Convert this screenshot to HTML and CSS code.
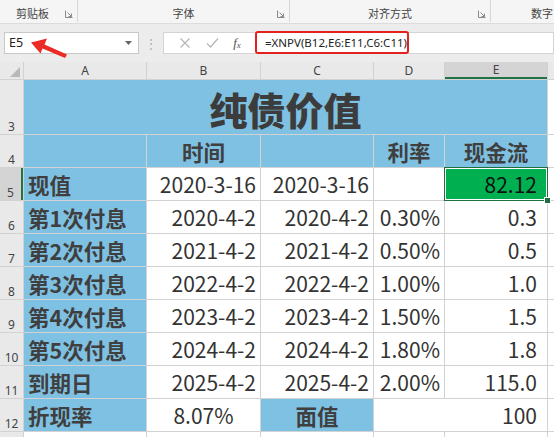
FILE: index.html
```html
<!DOCTYPE html>
<html lang="zh">
<head>
<meta charset="utf-8">
<title>纯债价值</title>
<link rel="stylesheet" href="styles.css">
</head>
<body>
<div class="app">
  <div class="ribbon">
    <div class="grp g1"><span class="glabel">剪贴板</span><svg class="launch" width="8" height="8" viewBox="0 0 8 8"><path d="M0.5 0.5V7.5H7.5" fill="none" stroke="#8a8a8a"/><path d="M2.5 2.5L6.5 6.5M6.5 3.5V6.5H3.5" fill="none" stroke="#8a8a8a"/></svg></div>
    <div class="grp g2"><span class="glabel">字体</span><svg class="launch" width="8" height="8" viewBox="0 0 8 8"><path d="M0.5 0.5V7.5H7.5" fill="none" stroke="#8a8a8a"/><path d="M2.5 2.5L6.5 6.5M6.5 3.5V6.5H3.5" fill="none" stroke="#8a8a8a"/></svg></div>
    <div class="grp g3"><span class="glabel">对齐方式</span><svg class="launch" width="8" height="8" viewBox="0 0 8 8"><path d="M0.5 0.5V7.5H7.5" fill="none" stroke="#8a8a8a"/><path d="M2.5 2.5L6.5 6.5M6.5 3.5V6.5H3.5" fill="none" stroke="#8a8a8a"/></svg></div>
    <div class="grp g4"><span class="glabel">数字</span></div>
  </div>
  <div class="fbar">
    <div class="namebox"><span>E5</span><svg width="7" height="4" viewBox="0 0 7 4"><path d="M0 0H7L3.5 4Z" fill="#666"/></svg></div>
    <div class="dots">⋮</div>
    <div class="fbtns">
      <svg width="12" height="12" viewBox="0 0 12 12"><path d="M1.5 1.5L10.5 10.5M10.5 1.5L1.5 10.5" stroke="#b5b5b5" stroke-width="1.2" fill="none"/></svg>
      <svg width="13" height="12" viewBox="0 0 13 12"><path d="M1 6.5L4.5 10L12 1.5" stroke="#b5b5b5" stroke-width="1.2" fill="none"/></svg>
      <span class="fx">f<sub>x</sub></span>
    </div>
    <div class="finput"><span class="formula">=XNPV(B12,E6:E11,C6:C11)</span></div>
  </div>
  <div class="sheet">
    <div class="corner"><svg width="10" height="10" viewBox="0 0 10 10"><path d="M10 0V10H0Z" fill="#b8b8b8"/></svg></div>
    <div class="ch">A</div><div class="ch">B</div><div class="ch">C</div><div class="ch">D</div><div class="ch sel">E</div><div class="ch"></div>

    <div class="rh">3</div>
    <div class="c blue title">纯债价值</div>
    <div class="c white"></div>

    <div class="rh">4</div>
    <div class="c blue"></div><div class="c blue hd">时间</div><div class="c blue"></div><div class="c blue hd">利率</div><div class="c blue hd">现金流</div><div class="c white"></div>

    <div class="rh rsel">5</div>
    <div class="c blue lab">现值</div><div class="c white num">2020-3-16</div><div class="c white num">2020-3-16</div><div class="c white"></div><div class="c green num e">82.12<span class="handle"></span></div><div class="c white"></div>

    <div class="rh">6</div>
    <div class="c blue lab">第1次付息</div><div class="c white num">2020-4-2</div><div class="c white num">2020-4-2</div><div class="c white num">0.30%</div><div class="c white num e">0.3</div><div class="c white"></div>

    <div class="rh">7</div>
    <div class="c blue lab">第2次付息</div><div class="c white num">2021-4-2</div><div class="c white num">2021-4-2</div><div class="c white num">0.50%</div><div class="c white num e">0.5</div><div class="c white"></div>

    <div class="rh">8</div>
    <div class="c blue lab">第3次付息</div><div class="c white num">2022-4-2</div><div class="c white num">2022-4-2</div><div class="c white num">1.00%</div><div class="c white num e">1.0</div><div class="c white"></div>

    <div class="rh">9</div>
    <div class="c blue lab">第4次付息</div><div class="c white num">2023-4-2</div><div class="c white num">2023-4-2</div><div class="c white num">1.50%</div><div class="c white num e">1.5</div><div class="c white"></div>

    <div class="rh">10</div>
    <div class="c blue lab">第5次付息</div><div class="c white num">2024-4-2</div><div class="c white num">2024-4-2</div><div class="c white num">1.80%</div><div class="c white num e">1.8</div><div class="c white"></div>

    <div class="rh">11</div>
    <div class="c blue lab">到期日</div><div class="c white num">2025-4-2</div><div class="c white num">2025-4-2</div><div class="c white num">2.00%</div><div class="c white num e">115.0</div><div class="c white"></div>

    <div class="rh">12</div>
    <div class="c blue lab">折现率</div><div class="c white num ctr">8.07%</div><div class="c blue hd">面值</div><div class="c white num e span2">100</div><div class="c white"></div>

    <div class="rh"></div>
    <div class="c white"></div><div class="c white"></div><div class="c white"></div><div class="c white"></div><div class="c white"></div><div class="c white"></div>
  </div>
  <svg class="arrow" width="554" height="437" viewBox="0 0 554 437"><path d="M31 42.5L47 38.5L44.5 44.5L67 54.5L65 58L42.5 48.5L40.5 53.5Z" fill="#ec2a26"/></svg>
</div>
</body>
</html>
```
FILE: styles.css
```css
html, body {
  margin: 0;
  padding: 0;
  background: #ffffff;
}
body {
  font-family: "Noto Sans CJK SC", "Noto Sans", sans-serif;
  color: #333;
  width: 554px;
  height: 437px;
  overflow: hidden;
}
.app {
  position: relative;
  width: 554px;
  height: 437px;
  overflow: hidden;
}
.ribbon {
  display: flex;
  height: 24px;
  background: #f5f5f5;
  border-bottom: 1px solid #dcdcdc;
  box-sizing: border-box;
}
.grp {
  position: relative;
  display: flex;
  align-items: flex-end;
  justify-content: center;
  padding-bottom: 2px;
  box-sizing: border-box;
  border-right: 1px solid #d6d6d6;
  height: 22px;
}
.glabel {
  font-size: 11px;
  color: #444;
  line-height: 14px;
}
.launch {
  position: absolute;
  right: 4px;
  bottom: 4px;
}
.g1 { width: 78px; justify-content: flex-start; padding-left: 16px; }
.g2 { width: 212px; }
.g3 { width: 201px; }
.g4 { flex: 1; border-right: none; justify-content: flex-start; padding-left: 40px; }

.fbar {
  display: flex;
  align-items: center;
  height: 38px;
  background: #ececec;
  padding: 7px 0 8px 4px;
  box-sizing: border-box;
}
.namebox {
  width: 135px;
  height: 22px;
  background: #fff;
  border: 1px solid #c8c8c8;
  box-sizing: border-box;
  display: flex;
  align-items: center;
  justify-content: space-between;
  padding: 0 6px 0 4px;
  font-family: "Noto Sans", sans-serif;
  font-size: 12.5px;
  color: #222;
}
.dots {
  width: 24px;
  text-align: center;
  color: #b0b0b0;
  font-size: 12px;
}
.fbtns {
  width: 89px;
  height: 22px;
  background: #fff;
  border: 1px solid #d4d4d4;
  border-right: none;
  box-sizing: border-box;
  display: flex;
  align-items: center;
  justify-content: space-around;
  padding: 0 4px 0 8px;
}
.fx {
  font-family: "Liberation Serif", serif;
  font-style: italic;
  font-size: 13px;
  color: #555;
}
.fx sub {
  font-size: 9px;
  vertical-align: -1px;
}
.finput {
  flex: 1;
  height: 22px;
  background: #fff;
  border: 1px solid #d4d4d4;
  border-left: none;
  box-sizing: border-box;
  display: flex;
  align-items: center;
  padding-left: 3px;
}
.formula {
  display: flex;
  align-items: center;
  height: 23px;
  width: 154px;
  box-sizing: border-box;
  border: 2px solid #e3211f;
  border-radius: 3px;
  padding-left: 8px;
  font-family: "Noto Sans", sans-serif;
  font-size: 11.5px;
  color: #222;
}

.sheet {
  display: grid;
  grid-template-columns: 23px 122px 113px 112px 70px 102px 1fr;
  grid-template-rows: 17px 54px 32px repeat(8, 32px) 10px;
  gap: 1px;
  background: #d2d2d2;
}
.corner {
  background: #e9e9e9;
  display: flex;
  align-items: flex-end;
  justify-content: flex-end;
  padding: 0 3px 2px 0;
}
.ch {
  background: #e9e9e9;
  font-family: "Noto Sans", sans-serif;
  font-size: 12px;
  color: #444;
  display: flex;
  align-items: center;
  justify-content: center;
  line-height: 1;
}
.ch.sel {
  background: #d4d4d4;
  border-bottom: 2px solid #217346;
  color: #444;
}
.rh {
  background: #e9e9e9;
  font-family: "Noto Sans", sans-serif;
  font-size: 12px;
  color: #444;
  display: flex;
  align-items: flex-end;
  justify-content: center;
  padding-bottom: 1px;
  line-height: 1;
  box-sizing: border-box;
}
.rh.rsel {
  background: #d4d4d4;
  border-right: 2px solid #217346;
}
.c {
  display: flex;
  align-items: center;
  box-sizing: border-box;
  min-width: 0;
  white-space: nowrap;
}
.blue { background: #7fc1e3; }
.white { background: #ffffff; }
.green { background: #00b050; }
.title {
  grid-column: span 5;
  justify-content: center;
  font-size: 38px;
  font-weight: 900;
  color: #3c3c3c;
  padding-top: 2px;
}
.hd {
  justify-content: center;
  font-size: 21.5px;
  font-weight: 700;
  color: #3f3f3f;
}
.lab {
  font-size: 21.5px;
  font-weight: 700;
  color: #3f3f3f;
  padding-left: 4px;
}
.num {
  justify-content: flex-end;
  font-size: 21px;
  color: #333;
  padding-right: 4px;
}
.num.e { padding-right: 10px; }
.num.ctr { justify-content: center; padding-right: 0; }
.span2 { grid-column: span 2; }
.green.e {
  position: relative;
  color: #111;
  box-shadow: inset 0 0 0 1px #fff, 0 0 0 1px #1e6e3e;
}
.handle {
  position: absolute;
  right: -4px;
  bottom: -4px;
  width: 5px;
  height: 5px;
  background: #1e6e3e;
  border: 1px solid #fff;
}
.arrow {
  position: absolute;
  left: 0;
  top: 0;
  pointer-events: none;
}
```
